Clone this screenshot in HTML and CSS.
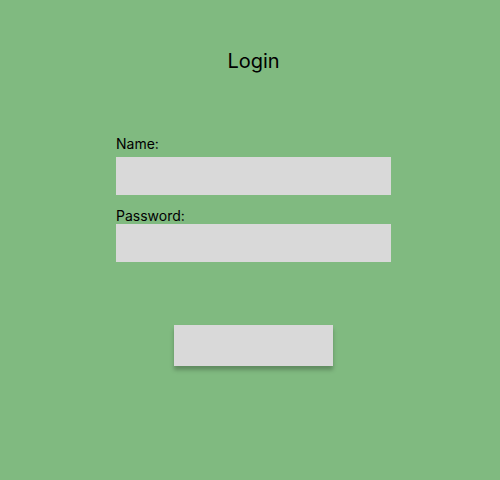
FILE: index.html
```html
<!DOCTYPE html>
<html lang="en">
<head>
<meta charset="utf-8">
<title>Login</title>
<link rel="stylesheet" href="styles.css">
</head>
<body>
<main class="page">
  <h1 class="title">Login</h1>
  <form class="form">
    <label class="label label-name" for="name">Name:</label>
    <input class="field" id="name" type="text">
    <label class="label label-pass" for="pass">Password:</label>
    <input class="field" id="pass" type="password">
    <button class="submit" type="button"></button>
  </form>
</main>
</body>
</html>
```
FILE: styles.css
```css
html, body {
  margin: 0;
  padding: 0;
  height: 100%;
}
body {
  background: #80ba80;
  font-family: Inter, "Noto Sans", sans-serif;
  color: #000;
}
.page {
  padding-left: 7px;
  display: flex;
  flex-direction: column;
  align-items: center;
}
.title {
  margin: 49px 0 0;
  font-size: 20px;
  font-weight: 400;
  line-height: 24px;
}
.form {
  width: 275px;
  margin-top: 62px;
  display: flex;
  flex-direction: column;
}
.label {
  font-size: 14px;
  line-height: 17px;
}
.label-pass {
  margin-top: 12px;
}
.field {
  display: block;
  box-sizing: border-box;
  width: 275px;
  height: 38px;
  margin: 5px 0 0;
  padding: 0;
  border: 0;
  background: #d9d9d9;
  outline: none;
}
.label-pass + .field {
  margin-top: 0;
}
.submit {
  align-self: center;
  width: 159px;
  height: 41px;
  margin-top: 63px;
  border: 0;
  padding: 0;
  background: #d9d9d9;
  box-shadow: 0 4px 4px rgba(0, 0, 0, 0.25);
}
```
